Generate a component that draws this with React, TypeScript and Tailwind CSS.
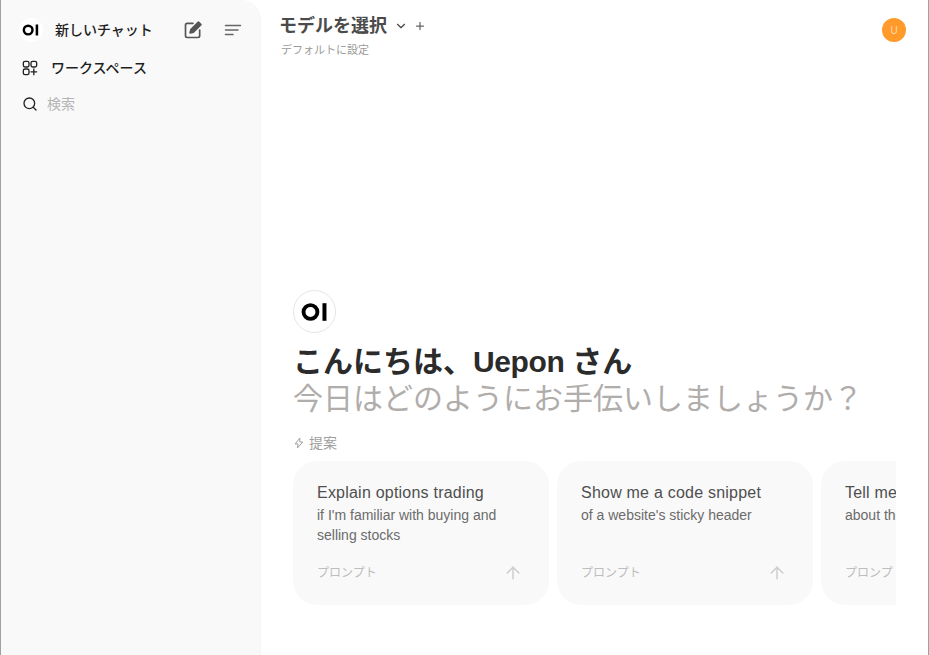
import { ArrowUp, ChevronDown, Plus, Search } from "lucide-react";

const FONT = "font-['Liberation_Sans','Noto_Sans_CJK_JP',sans-serif]";

const Logo = ({ size }: { size: number }) => (
  <svg width={size} height={size} viewBox="0 0 24 24" fill="none">
    <circle cx="8.6" cy="12" r="5.2" stroke="#000" strokeWidth="2.9" />
    <rect x="17.6" y="5.4" width="3" height="13.2" fill="#000" />
  </svg>
);

const prompts = [
  { title: "Explain options trading", sub: "if I'm familiar with buying and selling stocks" },
  { title: "Show me a code snippet", sub: "of a website's sticky header" },
  { title: "Tell me a fun fact", sub: "about the Roman Empire" },
];

const PromptCard = ({ title, sub }: { title: string; sub: string }) => (
  <div className="flex h-[144px] w-[256px] shrink-0 flex-col justify-between rounded-[24px] bg-[#f9f9f9] pb-[22px] pl-6 pr-[26px] pt-[21px]">
    <div>
      <div className="text-[16px] leading-[22px] tracking-[0.22px] text-[#4f4f4f]">{title}</div>
      <div className="mt-[1px] text-[14px] leading-[20px] text-[#6b6b6b]">{sub}</div>
    </div>
    <div className="flex items-center justify-between">
      <span className="text-[12px] leading-4 text-[#bdbdbd]">プロンプト</span>
      <ArrowUp size={20} strokeWidth={1.75} className="text-[#cccccc]" />
    </div>
  </div>
);

export default function App() {
  return (
    <div className={`${FONT} flex h-[655px] w-[929px] overflow-hidden border-x border-[#a0a0a0] bg-white`}>
      <aside className="flex w-[260px] shrink-0 flex-col rounded-tr-[20px] border-r border-[#f5f5f5] bg-[#f9f9f9] pl-[18px] pr-[17px] pt-[18px]">
        <div className="flex h-6 items-center">
          <div className="flex h-6 w-6 items-center justify-center rounded-full bg-white">
            <Logo size={20} />
          </div>
          <span className="ml-[12px] text-[14px] font-medium text-[#1f1f1f]">新しいチャット</span>
          <svg className="ml-auto text-[#555555]" width="20" height="20" viewBox="0 0 24 24" fill="none" stroke="currentColor" strokeWidth="2" strokeLinejoin="round" strokeLinecap="round">
            <path d="M12 4H5a2 2 0 0 0-2 2v13a2 2 0 0 0 2 2h13a2 2 0 0 0 2-2v-7" />
            <path d="M18.5 2.5 21.5 5.5 12.5 14.5 8.5 15.5 9.5 11.5z" fill="currentColor" />
          </svg>
          <svg className="ml-[20px] text-[#666666]" width="20" height="20" viewBox="0 0 24 24" fill="none" stroke="currentColor" strokeWidth="1.8" strokeLinecap="round">
            <path d="M3 6.5h18M3 12h15M3 17.5h9" />
          </svg>
        </div>
        <div className="mt-[14px] flex h-6 items-center">
          <svg className="ml-[3px] text-[#222222]" width="16" height="16" viewBox="0 0 24 24" fill="none" stroke="currentColor" strokeWidth="2" strokeLinecap="round" strokeLinejoin="round">
            <rect x="2" y="2" width="8.5" height="8.5" rx="2.5" />
            <rect x="13.5" y="2" width="8.5" height="8.5" rx="2.5" />
            <rect x="2" y="13.5" width="8.5" height="8.5" rx="2.5" />
            <path d="M17.75 13.5v8.5M13.5 17.75H22" />
          </svg>
          <span className="ml-[13px] text-[14px] font-medium text-[#1f1f1f]">ワークスペース</span>
        </div>
        <div className="mt-[12px] flex h-6 items-center">
          <Search size={16} strokeWidth={2} className="ml-[3px] text-[#222222]" />
          <span className="ml-[9px] text-[14px] text-[#b4b4b4]">検索</span>
        </div>
      </aside>

      <main className="flex min-w-0 flex-1 flex-col">
        <header className="flex items-start justify-between pl-[18px] pr-[22px] pt-[14px]">
          <div>
            <div className="flex h-6 items-center">
              <span className="text-[18px] font-bold text-[#4b4b4b]">モデルを選択</span>
              <ChevronDown size={14} strokeWidth={2} className="ml-[7px] text-[#444444]" />
              <Plus size={12} strokeWidth={2.5} className="ml-[6px] text-[#666666]" />
            </div>
            <div className="mt-[4px] pl-[2px] text-[11px] leading-4 text-[#9a9a9a]">デフォルトに設定</div>
          </div>
          <div className="mt-[4px] flex h-6 w-6 items-center justify-center rounded-full bg-[#ff9a2b] text-[10px] text-[#ffd9a8]">U</div>
        </header>

        <section className="mt-[232px] pl-[32px] pr-[32px]">
          <div className="flex h-[43px] w-[43px] items-center justify-center rounded-full border border-[#e5e5e5] bg-white">
            <Logo size={32} />
          </div>
          <h1 className="mt-[11px] text-[30px] font-bold leading-9 text-[#2b2b2b]">
            こんにちは、<span className="tracking-[-0.4px]">Uepon </span>さん
          </h1>
          <p className="pt-[1px] text-[30px] leading-9 text-[#b0adab]">今日はどのようにお手伝いしましょうか？</p>
          <div className="mt-[16px] flex h-5 items-center gap-[5px] text-[14px] text-[#a0a0a0]">
            <svg className="ml-[1px]" width="10" height="12" viewBox="0 0 10 12" fill="none" stroke="currentColor" strokeWidth="1" strokeLinejoin="round">
              <path d="M5.8 1 1.2 7h3l-.8 4L8.8 5h-3z" />
            </svg>
            <span>提案</span>
          </div>
          <div className="mt-[8px] flex gap-2 overflow-hidden">
            {prompts.map((p) => (
              <PromptCard key={p.title} title={p.title} sub={p.sub} />
            ))}
          </div>
        </section>
      </main>
    </div>
  );
}
